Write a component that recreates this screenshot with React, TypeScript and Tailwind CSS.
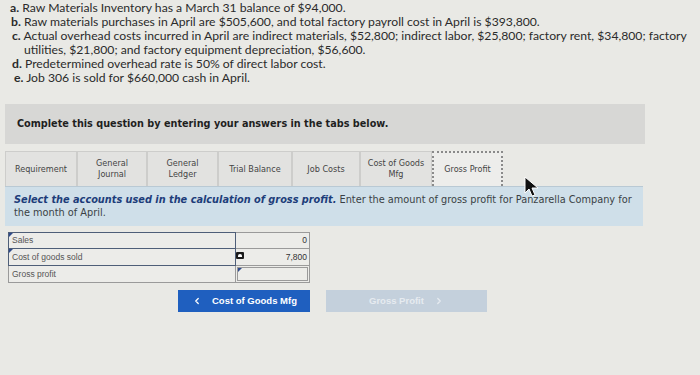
import { ChevronLeft, ChevronRight } from 'lucide-react'

const tabs = [
  { id: 'req', lines: ['Requirement'], w: 'w-[72px]' },
  { id: 'gj', lines: ['General', 'Journal'], w: 'w-[70px]' },
  { id: 'gl', lines: ['General', 'Ledger'], w: 'w-[71px]' },
  { id: 'tb', lines: ['Trial Balance'], w: 'w-[74px]' },
  { id: 'jc', lines: ['Job Costs'], w: 'w-[68px]' },
  { id: 'cgm', lines: ['Cost of Goods', 'Mfg'], w: 'w-[72px]' },
  { id: 'gp', lines: ['Gross Profit'], w: 'w-[71px]' },
]

const rows = [
  { label: 'Sales', value: '0', marked: true },
  { label: 'Cost of goods sold', value: '7,800', marked: true, icon: true },
  { label: 'Gross profit', value: '', marked: false },
]

export default function App() {
  return (
    <div className="relative w-[700px] h-[375px] overflow-hidden bg-[#e9e9e5] text-[#2b2b2b]">
      {/* problem data */}
      <div className="pt-[1px] pl-[10px] text-[12.2px] leading-[14px] font-['Lato',sans-serif] whitespace-nowrap">
        <p><b>a.</b> Raw Materials Inventory has a March 31 balance of $94,000.</p>
        <p className="pl-[1px]"><b>b.</b> Raw materials purchases in April are $505,600, and total factory payroll cost in April is $393,800.</p>
        <p className="pl-[2px]"><b>c.</b> Actual overhead costs incurred in April are indirect materials, $52,800; indirect labor, $25,800; factory rent, $34,800; factory</p>
        <p className="pl-[14px]">utilities, $21,800; and factory equipment depreciation, $56,600.</p>
        <p className="pl-[2px]"><b>d.</b> Predetermined overhead rate is 50% of direct labor cost.</p>
        <p className="pl-[4px]"><b>e.</b> Job 306 is sold for $660,000 cash in April.</p>
      </div>

      {/* instruction band */}
      <div className="mt-[19px] ml-[5px] w-[640px] h-[40px] bg-[#d7d7d5] flex items-center pl-[12px] font-['DejaVu_Sans',sans-serif] text-[9.7px] font-bold text-[#1f1f1f]">
        Complete this question by entering your answers in the tabs below.
      </div>

      {/* tabs */}
      <div className="mt-[7px] ml-[5px] flex font-['DejaVu_Sans_Condensed','DejaVu_Sans',sans-serif] text-[9px] leading-[11px] text-[#444]">
        {tabs.map((t) => (
          <div
            key={t.id}
            className={`${t.w} h-[35px] flex flex-col items-center justify-center text-center ${
              t.id === 'gp'
                ? 'bg-[#ededeb] border-[2px] border-dotted border-[#8a8a8a] border-b-0'
                : 'bg-[#e2e2e0] border border-[#cdcdcb] border-b-0'
            }`}
          >
            {t.lines.map((l) => (
              <span key={l}>{l}</span>
            ))}
          </div>
        ))}
      </div>

      {/* prompt panel */}
      <div className="ml-[5px] w-[638px] h-[40px] bg-[#cfdfe9] border-t border-[#b9c9d4] pl-[9px] pt-[6px] font-['DejaVu_Sans',sans-serif] text-[9.75px] leading-[13px] text-[#3a3f45] whitespace-nowrap">
        <p>
          <b className="italic text-[#1d3d7a]">Select the accounts used in the calculation of gross profit.</b>
          {'  '}Enter the amount of gross profit for Panzarella Company for
        </p>
        <p>the month of April.</p>
      </div>

      {/* answer table */}
      <div className="mt-[6px] ml-[8px] w-[302px] font-['Liberation_Sans',sans-serif] text-[8.5px] text-[#555]">
        {rows.map((r, i) => (
          <div key={r.label} className="flex h-[17px]">
            <div
              className={`relative w-[228px] flex items-center pl-[3px] ${
                r.marked ? 'border-[1.5px] border-[#4e5e78]' : 'border border-[#9a9a9a]'
              } ${i > 0 ? 'border-t-0' : ''} bg-[#ecece9]`}
            >
              {r.marked && (
                <span className="absolute left-0 top-0 w-0 h-0 border-t-[4px] border-r-[4px] border-t-[#2f4a8a] border-r-transparent" />
              )}
              {r.label}
            </div>
            <div
              className={`relative flex-1 flex items-center justify-end pr-[2px] border border-l-0 border-[#9a9a9a] ${
                i > 0 ? 'border-t-0' : ''
              } bg-[#ecece9] text-[#333]`}
            >
              {r.icon && (
                <span className="absolute left-[0px] top-[3px] w-[8px] h-[7px] bg-[#1a1a1a] rounded-[1px] flex items-center justify-center">
                  <span className="w-[4px] h-[3px] bg-white rounded-t-full" />
                </span>
              )}
              {!r.marked && (
                <span className="absolute left-[1px] top-[1px] right-[1px] bottom-[1px] border border-[#9a9a9a]">
                  <span className="absolute left-0 top-0 w-0 h-0 border-t-[4px] border-r-[4px] border-t-[#2f4a8a] border-r-transparent" />
                </span>
              )}
              {r.value}
            </div>
          </div>
        ))}
      </div>

      {/* nav buttons */}
      <div className="mt-[7px] ml-[178px] flex gap-[16px] font-['Liberation_Sans',sans-serif] text-[9.5px] font-bold">
        <div className="w-[132px] h-[22px] bg-[#1f5fbf] text-white flex items-center gap-[10px] pl-[14px]">
          <ChevronLeft size={10} strokeWidth={3} />
          <span>Cost of Goods Mfg</span>
        </div>
        <div className="w-[161px] h-[22px] bg-[#c4d0dc] text-[#e6ebf0] flex items-center gap-[10px] pl-[43px]">
          <span>Gross Profit</span>
          <ChevronRight size={10} strokeWidth={3} />
        </div>
      </div>

      {/* mouse cursor */}
      <svg className="absolute left-[523px] top-[176px]" width="18" height="22" viewBox="0 0 18 22">
        <path d="M2 1 L2 17 L6 13 L9 20 L12 19 L9 12 L15 12 Z" fill="#111" stroke="#fff" strokeWidth="1" />
      </svg>
    </div>
  )
}
